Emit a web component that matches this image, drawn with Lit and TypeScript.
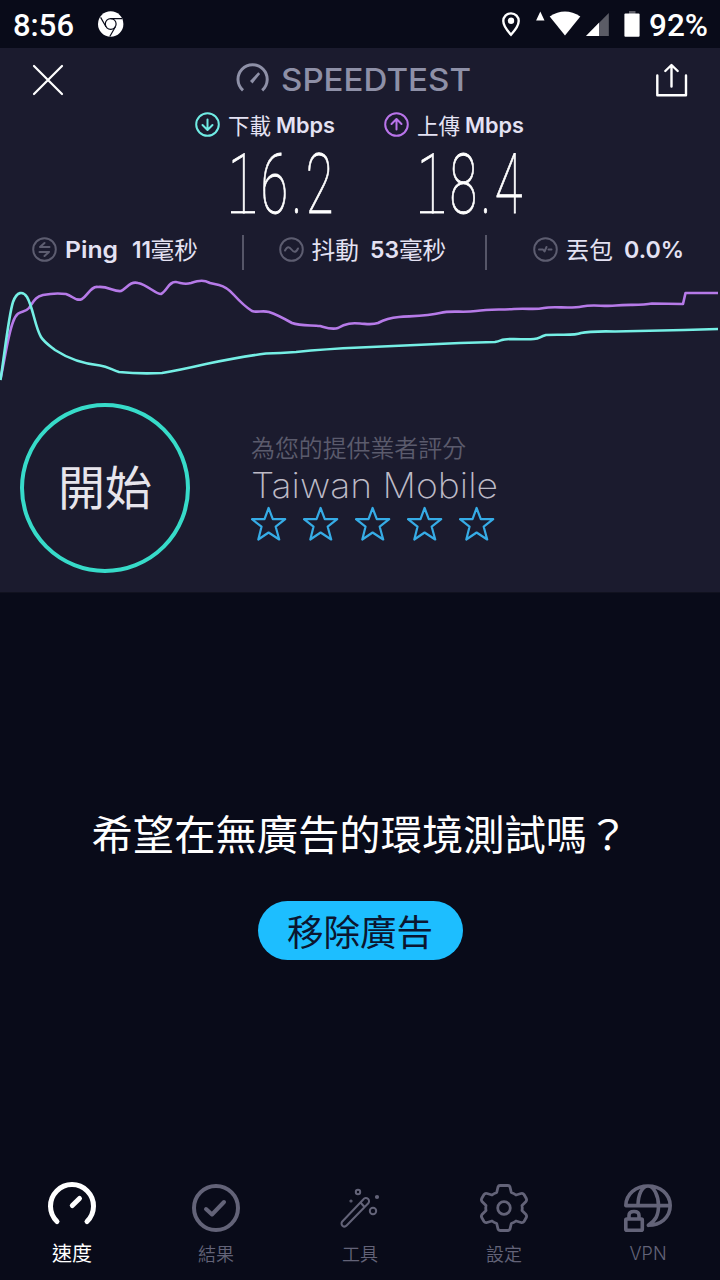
import { LitElement, html, css, svg } from "lit";
import { customElement } from "lit/decorators.js";

const SANS = css`"Inter", "Noto Sans CJK TC", sans-serif`;

/** Single line of text fitted to a given width. */
@customElement("fit-text")
class FitText extends LitElement {
  static properties = {
    text: {}, w: { type: Number }, h: { type: Number }, base: { type: Number },
  };
  declare text: string;
  declare w: number;
  declare h: number;
  declare base: number;
  static styles = css`
    :host { display: block; flex: none; }
    svg { display: block; overflow: visible; }
  `;
  render() {
    return html`<svg width=${this.w} height=${this.h}>
      <text x="0" y=${this.base} fill="currentColor" textLength=${this.w} lengthAdjust="spacingAndGlyphs">${this.text}</text>
    </svg>`;
  }
}

const SQUEEZE = 0.6;
const CENTERS = [13, 44.2, 67, 89.5];

/** Tall condensed readout; a leading 1 stands on a foot. */
@customElement("speed-value")
class SpeedValue extends LitElement {
  static properties = { value: {} };
  declare value: string;
  static styles = css`
    :host { display: block; }
    svg { display: block; overflow: visible; }
    text { font: 100 84px Roboto, sans-serif; text-anchor: middle; fill: #fff; stroke: #fff; stroke-width: .7; vector-effect: non-scaling-stroke; }
    path { stroke: #fff; stroke-width: 2.4; }
  `;
  render() {
    const xs = CENTERS.map((c, i) => ((c - (i === 0 ? 1 : 0)) / SQUEEZE).toFixed(1)).join(" ");
    return html`<svg width="106" height="81">
      <text transform="scale(${SQUEEZE} 1)" x=${xs} y="69">${this.value}</text>
      <path d="M1 68.300H25"/>
    </svg>`;
  }
}

@customElement("status-bar")
class StatusBar extends LitElement {
  static styles = css`
    :host { display: flex; height: 48px; padding: 0 12px 0 13px; color: #fff; align-items: stretch;
      font: 500 31px Roboto, sans-serif; justify-content: space-between; box-sizing: border-box; }
    div { display: flex; }
    svg { display: block; }
    .chrome { margin-left: 23px; }
  `;
  render() {
    return html`
      <div>
        <fit-text text="8:56" w="61" h="48" base="36"></fit-text>
        <svg class="chrome" width="28" height="48" viewBox="97 0 28 48">
          <circle cx="110.7" cy="24" r="12.7" fill="#fff"/>
          <g fill="none" stroke="#090b19" stroke-width="1.2">
            <circle cx="110.7" cy="24" r="5.4"/>
            <path d="M110.7 18.6H122M106 26.7L100.6 17.4M115.4 26.7L109.8 36.5"/>
          </g>
        </svg>
      </div>
      <div>
        <svg width="149" height="48" viewBox="500 0 149 48">
          <path d="M511 13.4c-4.500 0-7.700 3.300-7.700 7.700 0 5.400 7.700 13.600 7.700 13.600s7.700-8.200 7.700-13.600c0-4.400-3.200-7.700-7.700-7.700z" fill="none" stroke="#fff" stroke-width="2.400"/>
          <circle cx="511" cy="20.800" r="3.200" fill="#fff"/>
          <path d="M540.300 11.500l4.200 9h-8.400z" fill="#fff"/>
          <path d="M549.700 16.500Q565 6.500 580.300 16.500L565 35.500z" fill="#fff"/>
          <path d="M586 36L608.800 13V36z" fill="#5b5c66"/>
          <path d="M586 36L599 22.800V36z" fill="#fff"/>
          <rect x="629" y="11" width="6.500" height="4" fill="#5b5c66"/>
          <rect x="624.400" y="13.500" width="15.200" height="23.200" rx="1" fill="#fff"/>
        </svg>
        <fit-text text="92%" w="59" h="48" base="36"></fit-text>
      </div>`;
  }
}

@customElement("result-panel")
class ResultPanel extends LitElement {
  static styles = css`
    :host { display: flex; flex-direction: column; height: 545px; background: #1b1b2e; color: #e4e2f3;
      border-bottom: 1px solid #11121f; box-sizing: border-box; font-family: ${SANS}; }
    svg { display: block; flex: none; }
    .top { display: grid; grid-template-columns: 204px 419px 34px; height: 58px; padding-left: 32px; }
    .brand { display: flex; gap: 11px; color: #8e90a7; font-size: 31px; font-weight: 550; }
    .speeds { display: grid; grid-template-columns: 189px 150px; margin-left: 195px; height: 121px; align-content: start; }
    .head { display: flex; height: 38px; font-size: 21px; }
    .cjk { font-family: "Noto Sans CJK TC", sans-serif; font-weight: 400; line-height: 38px; white-space: nowrap; }
    .head .cjk { margin: 0 6px 0 8px; width: 42px; font-size: 21.500px; }
    .head fit-text { font-weight: 600; }
    speed-value { margin-left: 35px; }
    .stats { display: flex; height: 44px; align-items: flex-start; font-size: 23px; font-weight: 600; }
    .stats .cjk { font-size: 23.700px; line-height: 44px; }
    .bar { width: 2px; height: 35px; margin-top: 8px; background: #565668; flex: none; }
    .stat { display: flex; box-sizing: border-box; }
    .s1 { width: 242px; padding-left: 32px; }
    .s2 { width: 241px; padding-left: 35px; }
    .s3 { padding-left: 46px; }
    .stat svg { margin-right: 7.500px; }
    .gap { margin-left: 11px; }
    .wide { margin-left: 14px; }
    .bottom { display: flex; padding: 20.500px 0 0 20px; gap: 61px; }
    .go { width: 170px; height: 170px; border: 4px solid #37dbc9; border-radius: 50%; box-sizing: border-box;
      display: flex; align-items: center; justify-content: center; color: #e7e5ec; padding-bottom: 6px;
      font: 400 47px/1 "Noto Sans CJK TC", sans-serif; white-space: nowrap; }
    .rate { padding-top: 26.500px; }
    .hint { font: 350 23.900px/36px "Noto Sans CJK TC", sans-serif; color: #5b5b6d; white-space: nowrap; }
    .isp { color: #bdbac6; font-size: 35px; font-weight: 250; }
    .stars { display: flex; gap: 16px; margin-top: 3px; }
  `;
  ring(inner: unknown, color: string, h: number) {
    return html`<svg width="25" height=${h} viewBox="-12.500 ${-h / 2} 25 ${h}" fill="none" stroke=${color}
      stroke-width="2" stroke-linecap="round" stroke-linejoin="round"><circle r="11.300"/>${inner}</svg>`;
  }
  render() {
    return html`
      <div class="top">
        <svg width="32" height="58" viewBox="32 48 32 58"><path d="M34 66L62 94M62 66L34 94" stroke="#fff" stroke-width="2.200" stroke-linecap="round"/></svg>
        <div class="brand">
          <svg width="34" height="58" viewBox="236 48 34 58" fill="none" stroke="currentColor" stroke-width="3">
            <path d="M243 90.300A14.600 14.600 0 1 1 262.200 90.300"/><path d="M250 81l8.300-8.800 1.800 1.700-7.600 9.500z" fill="currentColor" stroke="none"/>
          </svg>
          <fit-text text="SPEEDTEST" w="190" h="58" base="43"></fit-text>
        </div>
        <svg width="34" height="58" viewBox="655 48 34 58" fill="none" stroke="#fff" stroke-width="2.400" stroke-linecap="round" stroke-linejoin="round">
          <path d="M657.300 75.500V95.200H686V75.500M671.500 86.500V65.500M665.300 71L671.500 65l6.200 6"/>
        </svg>
      </div>
      <div class="speeds">
        <div>
          <div class="head">${this.ring(svg`<path d="M0-5V5M-5 0.500L0 5.500L5 0.500"/>`, "#70ece4", 37)}
            <span class="cjk">下載</span><fit-text text="Mbps" w="59" h="38" base="27"></fit-text></div>
          <speed-value value="16.2"></speed-value>
        </div>
        <div>
          <div class="head">${this.ring(svg`<path d="M0 5V-5M-5-0.500L0-5.500L5-0.500"/>`, "#b974ea", 37)}
            <span class="cjk">上傳</span><fit-text text="Mbps" w="59" h="38" base="27"></fit-text></div>
          <speed-value value="18.4"></speed-value>
        </div>
      </div>
      <div class="stats">
        <div class="stat s1">${this.ring(svg`<path d="M-4.500-2.500H5M-4.500-2.500L0-6.500M4.500 2.500H-5M4.500 2.500L0 6.500"/>`, "#5d5d70", 45)}
          <fit-text text="Ping" w="53" h="44" base="31"></fit-text>
          <fit-text class="wide" text="11" w="19" h="44" base="31"></fit-text><span class="cjk">毫秒</span></div>
        <div class="bar"></div>
        <div class="stat s2">${this.ring(svg`<path d="M-6.500 1C-4-4-2-2.500 0 0S4 4 6.500-1"/>`, "#5d5d70", 45)}
          <span class="cjk">抖動</span>
          <fit-text class="gap" text="53" w="29" h="44" base="31"></fit-text><span class="cjk">毫秒</span></div>
        <div class="bar"></div>
        <div class="stat s3">${this.ring(svg`<path d="M-6.500 0H-2.500L-1 2L1-2.500M3 0H6"/>`, "#5d5d70", 45)}
          <span class="cjk">丟包</span>
          <fit-text class="gap" text="0.0%" w="60" h="44" base="31"></fit-text></div>
      </div>
      <svg width="720" height="111" viewBox="0 271 720 111" fill="none" stroke-width="2.600" stroke-linejoin="round">
        <path stroke="#b67ae8" d="M0.500 379C5 358 8 335 13 322C18 308 24 314 29 308C34 301 35 297 43 295Q55 292.500 66 294C73 296 76 302 82 299C88 295 91 286 98 287C108 286 114 292 121 291C127 288 130 281 138 283C148 285 155 294 161 294C167 291 169 281 176 282C182 283 184 285 191 283C200 280 204 280 210 283L219 285Q227 287 234 295Q244 306 252 311C258 313 262 310 269 312Q278 315 292 323C300 326 312 325 320 326C327 328 332 330 338 328C346 323 352 323 360 323.500S372 325 378 323Q387 318 399 317C414 316 428 316 440 313S462 313 476 311S500 310 514 309S534 310 544 308S570 309 582 306.500S604 307 616 305.500S640 306 652 303.500L683 304L685.500 293H718"/>
        <path stroke="#75efe5" d="M0.500 380C5 350 9 314 13 302C17 291 23 291 27 297C33 307 35 327 41 337C44 342 50 346 55 350Q75 363 100 365.500C108 366.500 112 370 119 372Q139 374 162 373Q180 370 206 364Q240 357 266 353.500Q280 353 296 352Q325 349 360 347.500L460 343L495 342C504 340 500 339 514 339C544 340 535 338 546 335C560 334 574 336 581 333Q590 331 615 331.500L684 330L718 329"/>
      </svg>
      <div class="bottom">
        <div class="go">開始</div>
        <div class="rate">
          <div class="hint">為您的提供業者評分</div>
          <div class="isp"><fit-text text="Taiwan Mobile" w="247" h="38" base="32.500"></fit-text></div>
          <div class="stars">${[0, 1, 2, 3, 4].map(() => html`<svg width="36" height="36" viewBox="0 0 36 36" fill="none" stroke="#36ace6" stroke-width="2.200" stroke-linejoin="round">
            <path d="M17.600 2L21.800 13.200H34.200L24.700 20.700L28.200 33.500L17.600 26.500L7.300 33.500L10.500 20.700L1 13.200H13.500Z"/></svg>`)}</div>
        </div>
      </div>`;
  }
}

@customElement("tab-bar")
class TabBar extends LitElement {
  static styles = css`
    :host { display: grid; grid-template-columns: repeat(5, 1fr); height: 110px; color: #636378; }
    .tab { display: flex; flex-direction: column; align-items: center; font: 350 18px/24px "Noto Sans CJK TC", sans-serif; padding-top: 8px; }
    .on { color: #fff; font-size: 20px; font-weight: 400; }
    .vpn { font-family: "Inter", sans-serif; font-weight: 350; line-height: 26px; }
    svg { display: block; margin-bottom: 7px; fill: none; stroke: currentColor; stroke-linecap: round; stroke-linejoin: round; }
  `;
  render() {
    return html`
      <div class="tab on"><svg width="52" height="56" viewBox="46 1178 52 56" stroke-width="5"><path d="M57 1221.500A21.500 21.500 0 1 1 87 1221.500M72.300 1205.500L79.500 1198.500"/></svg>速度</div>
      <div class="tab"><svg width="52" height="56" viewBox="190 1178 52 56" stroke-width="4"><circle cx="216" cy="1208" r="22"/><path d="M206 1209L212 1214.500L224 1202"/></svg>結果</div>
      <div class="tab"><svg width="52" height="56" viewBox="334 1178 52 56" stroke-width="2">
        <path d="M342.300 1221.500L363.500 1199.200A2.800 2.800 0 0 1 368.300 1203.300L346.600 1225.500A2.900 2.900 0 0 1 342.300 1221.500ZM360.500 1202.500L364.500 1207"/>
        <circle cx="358" cy="1192" r="2.200"/><circle cx="373" cy="1211" r="3.200"/><circle cx="351" cy="1201" r=".6"/><circle cx="377" cy="1197" r="1.100"/></svg>工具</div>
      <div class="tab"><svg width="52" height="56" viewBox="478 1178 52 56" stroke-width="2.800">
        <path d="M500 1185.500H508Q509.500 1185.500 510 1187L511.300 1192.500Q514 1193.500 516 1195L521 1193.500Q523 1193 524 1194.500L526.300 1198.500Q527 1200 526 1201.500L522 1205.500Q522.500 1208 522 1210.500L526 1214.500Q527 1216 526.300 1217.500L524 1221.500Q523 1223 521 1222.500L516 1221Q514 1222.500 511.300 1223.500L510 1229Q509.500 1230.500 508 1230.500H500Q498.500 1230.500 498 1229L496.700 1223.500Q494 1222.500 492 1221L487 1222.500Q485 1223 484 1221.500L481.700 1217.500Q481 1216 482 1214.500L486 1210.500Q485.500 1208 486 1205.500L482 1201.500Q481 1200 481.700 1198.500L484 1194.500Q485 1193 487 1193.500L492 1195Q494 1193.500 496.700 1192.500L498 1187Q498.500 1185.500 500 1185.500Z"/><circle cx="504" cy="1208" r="6.300"/></svg>設定</div>
      <div class="tab vpn"><svg width="52" height="56" viewBox="622 1178 52 56" stroke-width="3.600">
        <path d="M625.800 1205.600C626 1194 636 1186 648 1186S670.200 1194 670.200 1205.600C670.200 1218 660 1225.300 648.300 1225.300M625.800 1205.600H670.200M638 1205.600C638 1195 642 1186 648 1186S658.500 1196 658.500 1205.600S656 1220 648.300 1225.300"/>
        <rect x="625.800" y="1219" width="16.500" height="11.200" rx="1"/><path d="M629 1218.500V1215.500Q629 1211.500 634 1211.500T639 1215.500V1218.500"/></svg>VPN</div>`;
  }
}

@customElement("app-root")
class AppRoot extends LitElement {
  static styles = css`
    :host { display: flex; flex-direction: column; width: 720px; height: 1280px; background: #090b19; overflow: hidden; }
    .promo { flex: 1; display: flex; flex-direction: column; align-items: center; padding-top: 209px; box-sizing: border-box;
      font-family: "Noto Sans CJK TC", sans-serif; white-space: nowrap; }
    .ask { font-size: 41.300px; line-height: 60px; color: #fff; }
    .btn { margin-top: 39px; width: 205px; height: 59px; border-radius: 30px; background: #1dbeff; color: #0b1630;
      display: flex; align-items: center; justify-content: center; font-size: 36.500px; line-height: 59px; }
  `;
  render() {
    return html`
      <status-bar></status-bar>
      <result-panel></result-panel>
      <div class="promo">
        <div class="ask">希望在無廣告的環境測試嗎？</div>
        <div class="btn">移除廣告</div>
      </div>
      <tab-bar></tab-bar>`;
  }
}
